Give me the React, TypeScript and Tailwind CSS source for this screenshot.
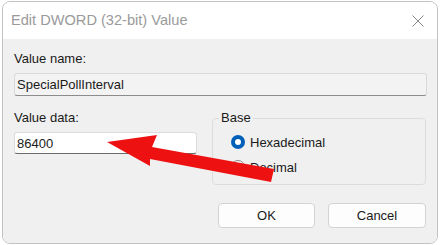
import React from "react";

export default function App() {
  const font = { fontFamily: '"Liberation Sans", Arial, sans-serif' };
  return (
    <div className="relative w-[440px] h-[245px] bg-white overflow-hidden" style={font}>
      <div className="ml-[2px] mt-[1px] w-[436px] h-[243px] rounded-[8px] border border-[#c2c2c2] overflow-hidden flex flex-col">
        <div className="h-[37px] bg-white flex items-center justify-between pl-[8px] pr-[13px]">
          <span className="text-[14.6px] text-[#9a9a9a] leading-none">Edit DWORD (32-bit) Value</span>
          <svg width="12" height="12" viewBox="0 0 12 12" className="mt-[1px]">
            <path d="M0.5 0.5 L11.5 11.5 M11.5 0.5 L0.5 11.5" stroke="#8a8a8a" strokeWidth="1" fill="none" />
          </svg>
        </div>
        <div className="flex-1 bg-[#f0f0f0] px-[11px] flex flex-col text-[13px] text-[#1a1a1a]">
          <div className="mt-[12px] leading-[16px]">Value name:</div>
          <div className="mt-[6px] h-[23px] w-[413px] bg-[#f3f3f3] border border-[#dadada] border-b-[#8c8c8c] rounded-[3px] flex items-center px-[2px] leading-none">
            SpecialPollInterval
          </div>
          <div className="mt-[14px] flex items-start">
            <div className="flex flex-col">
              <div className="leading-[16px]">Value data:</div>
              <div className="mt-[6px] h-[22px] w-[183px] bg-white border border-[#dcdcdc] border-b-[#6a6a6a] rounded-[3px] flex items-center px-[2px] leading-none">
                86400
              </div>
            </div>
            <fieldset className="ml-[15px] w-[215px] h-[75px] border border-[#dcdcdc] rounded-[4px] pl-[6px]">
              <legend className="px-[2px] leading-[16px]">Base</legend>
              <div className="ml-[12px] mt-[6px] flex flex-col gap-[5px]">
                <div className="h-[20px] flex items-center gap-[5px]">
                  <span className="w-[14px] h-[14px] rounded-full bg-[#005fb8] flex items-center justify-center">
                    <span className="w-[6px] h-[6px] rounded-full bg-white" />
                  </span>
                  <span className="leading-none">Hexadecimal</span>
                </div>
                <div className="h-[20px] flex items-center gap-[5px]">
                  <span className="w-[14px] h-[14px] rounded-full border border-[#8a8a8a] bg-[#f5f5f5]" />
                  <span className="leading-none">Decimal</span>
                </div>
              </div>
            </fieldset>
          </div>
          <div className="mt-[18px] flex justify-end gap-[13px]">
            <button className="w-[97px] h-[25px] bg-[#fdfdfd] border border-[#d3d3d3] rounded-[4px] text-[13px] text-[#1a1a1a]" style={font}>
              OK
            </button>
            <button className="w-[98px] h-[25px] bg-[#fdfdfd] border border-[#d3d3d3] rounded-[4px] text-[13px] text-[#1a1a1a]" style={font}>
              Cancel
            </button>
          </div>
        </div>
      </div>
      <svg className="absolute inset-0 pointer-events-none" width="440" height="245" viewBox="0 0 440 245">
        <polygon
          points="107,142 157,135 152,147 274,169 271,182 150,159 150,166"
          fill="#ee1111"
        />
      </svg>
    </div>
  );
}
